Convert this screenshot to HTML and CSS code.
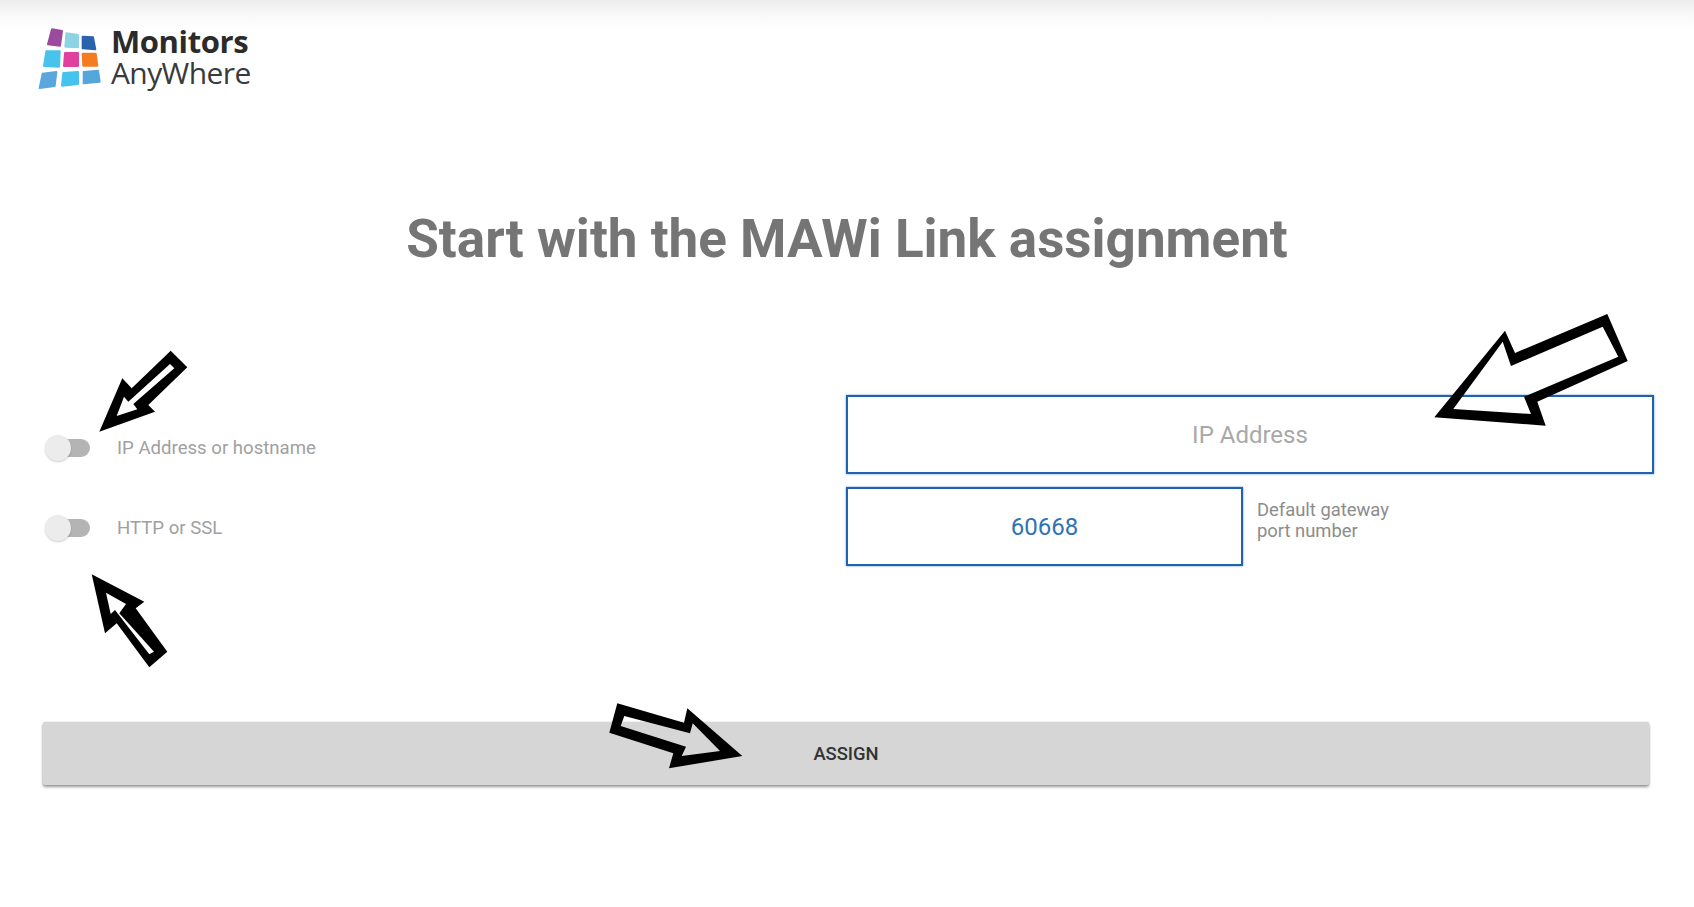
FILE: index.html
```html
<!DOCTYPE html>
<html lang="en">
<head>
<meta charset="utf-8">
<title>MAWi Link assignment</title>
<link rel="stylesheet" href="styles.css">
</head>
<body>
<div class="page">
  <header class="header">
    <svg class="logo-mark" viewBox="110 80 195 190" aria-hidden="true">
      <g class="logo-tiles">
        <path fill="#9b4a9e" stroke="#9b4a9e" d="M155 86 185 91 179 135 143 131Z"/>
        <path fill="#8dd3e3" stroke="#8dd3e3" d="M198 98 233 103 233 140 195 138Z"/>
        <path fill="#2b62ae" stroke="#2b62ae" d="M247 108 278 110 285 146 247 143Z"/>
        <path fill="#4ac3ec" stroke="#4ac3ec" d="M138 152 178 152 176 198 131 196Z"/>
        <path fill="#e0409e" stroke="#e0409e" d="M194 157 233 157 233 196 191 196Z"/>
        <path fill="#f47b20" stroke="#f47b20" d="M247 159 286 159 291 195 249 195Z"/>
        <path fill="#59a7dc" stroke="#59a7dc" d="M127 219 168 214 163 256 118 262Z"/>
        <path fill="#45c3ef" stroke="#45c3ef" d="M189 217 233 214 233 250 185 255Z"/>
        <path fill="#55a6da" stroke="#55a6da" d="M250 214 293 210 298 243 250 248Z"/>
      </g>
    </svg>
    <div class="logo-text">
      <span class="logo-top">Monitors</span>
      <span class="logo-bottom">AnyWhere</span>
    </div>
  </header>

  <h1 class="title">Start with the MAWi Link assignment</h1>

  <section class="form">
    <div class="toggles">
      <div class="toggle-row">
        <span class="switch"><span class="track"></span><span class="thumb"></span></span>
        <span class="toggle-label">IP Address or hostname</span>
      </div>
      <div class="toggle-row">
        <span class="switch"><span class="track"></span><span class="thumb"></span></span>
        <span class="toggle-label">HTTP or SSL</span>
      </div>
    </div>
    <div class="fields">
      <div class="field field-wide placeholder">IP Address</div>
      <div class="port-row">
        <div class="field field-port value">60668</div>
        <div class="port-hint">Default gateway<br>port number</div>
      </div>
    </div>
  </section>

  <div class="assign">ASSIGN</div>

  <svg class="arrows" viewBox="0 0 1694 907" aria-hidden="true">
    <path fill-rule="evenodd" d="M1434.3 417.3 1545.7 425.7 1537.3 401.7 1627.7 361 1607.3 314 1515 353 1505 330.7ZM1453.3 409 1502.7 341.7 1511 366 1602.7 326.7 1618.3 356.7 1524 396.7 1531 414Z"/>
    <path fill-rule="evenodd" d="M99.3 431.7 155 411.7 148.3 405 187.3 367.3 170.7 350.7 131.7 388.3 122.3 378.3ZM116.7 416 124 396.7 128.3 401.7 170 364 174.3 368.3 133.3 404 137.3 409.3Z"/>
    <path fill-rule="evenodd" d="M91.7 574.3 144.3 601.7 135.7 608.3 167.3 651.7 149.3 667.3 116.7 623.3 105 633.3ZM106 592.7 110.7 614 115 610 149.3 654.3 154 651.7 119.3 613.3 126 604Z"/>
    <path fill-rule="evenodd" d="M742.3 756 669 768.3 673.3 753.3 609.3 732.7 617.3 703.3 684 722.7 687.3 708.3ZM720 751 692.7 723.3 690 733.3 624.3 716 620.7 726 686 746.7 681.7 756Z"/>
  </svg>
</div>
</body>
</html>
```

FILE: styles.css
```css
* { box-sizing: border-box; }

html, body {
  margin: 0;
  height: 100%;
  background: #fff;
}

.page {
  position: relative;
  width: 1694px;
  height: 907px;
  overflow: hidden;
  font-family: Roboto, "Liberation Sans", sans-serif;
  background: linear-gradient(to bottom, #ececec 0, #f8f8f8 14px, #fff 30px) no-repeat;
}

.header {
  display: flex;
  align-items: center;
  gap: 9px;
  height: 91px;
  padding: 27px 0 0 37px;
}

.logo-mark {
  width: 65px;
  height: 64px;
  flex: none;
}

.logo-tiles {
  filter: blur(0.6px);
  stroke-width: 6;
  stroke-linejoin: round;
}

.logo-text {
  display: flex;
  flex-direction: column;
  font-family: "Open Sans", sans-serif;
  color: #2b2b2b;
}

.logo-top {
  font-size: 31px;
  line-height: 32px;
  font-weight: 700;
  letter-spacing: -0.4px;
  margin-top: -5px;
}

.logo-bottom {
  font-size: 30px;
  line-height: 32px;
  font-weight: 400;
  letter-spacing: -0.6px;
  color: #3a3a3a;
}

.title {
  margin: 118px 0 0;
  height: 60px;
  font-size: 53px;
  line-height: 60px;
  font-weight: 700;
  text-align: center;
  color: #757575;
}

.form {
  display: flex;
  justify-content: space-between;
  margin-top: 126px;
  padding: 0 40px 0 45px;
}

.toggles {
  display: flex;
  flex-direction: column;
  gap: 54px;
  padding-top: 40px;
}

.toggle-row {
  display: flex;
  align-items: center;
  gap: 26px;
  height: 26px;
}

.switch {
  position: relative;
  display: block;
  width: 46px;
  height: 26px;
}

.track {
  position: absolute;
  left: 6px;
  top: 4px;
  width: 39px;
  height: 18px;
  border-radius: 9px;
  background: #b4b4b4;
}

.thumb {
  position: absolute;
  left: 0;
  top: 0;
  width: 26px;
  height: 26px;
  border-radius: 50%;
  background: #ececec;
  box-shadow: 0 1px 2px rgba(0, 0, 0, 0.2);
}

.toggle-label {
  font-size: 18.6px;
  color: #a0a0a0;
}

.fields {
  display: flex;
  flex-direction: column;
  gap: 13px;
  width: 808px;
}

.field {
  display: flex;
  align-items: center;
  justify-content: center;
  border: 2px solid #1f62ad;
  box-shadow: 0 0 2px rgba(32, 110, 190, 0.7);
  font-size: 24px;
  height: 79px;
}

.placeholder { color: #a8a8a8; }
.value { color: #2f72b5; }

.port-row {
  display: flex;
  align-items: center;
  gap: 14px;
}

.field-port {
  width: 397px;
}

.port-hint {
  font-size: 18.4px;
  line-height: 21px;
  color: #8c8c8c;
  padding-bottom: 13px;
}

.assign {
  display: flex;
  align-items: center;
  justify-content: center;
  width: 1606px;
  height: 63px;
  margin: 156px 0 0 43px;
  font-size: 18.4px;
  font-weight: 500;
  color: #333;
  background: #d6d6d6;
  border-radius: 2px;
  box-shadow: 0 2px 3px rgba(0, 0, 0, 0.4), 0 0 2px rgba(0, 0, 0, 0.15);
}

.arrows {
  position: absolute;
  left: 0;
  top: 0;
  width: 1694px;
  height: 907px;
  pointer-events: none;
}
```
